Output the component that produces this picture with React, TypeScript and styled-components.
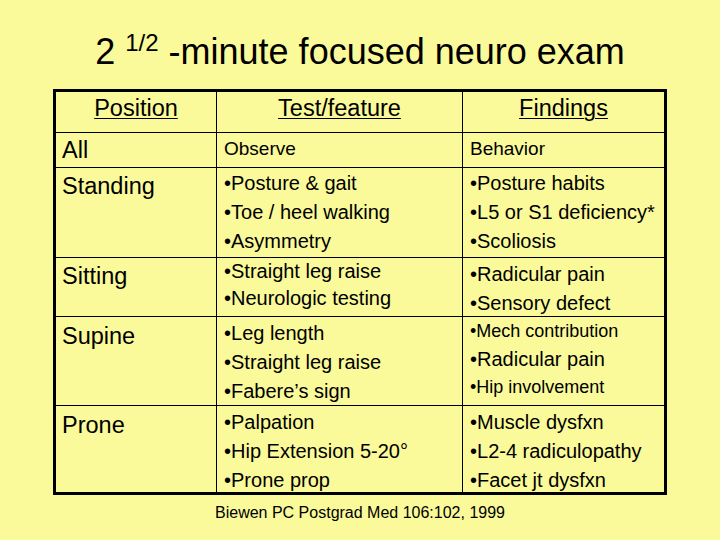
import React from "react";
import styled, { createGlobalStyle } from "styled-components";

interface Line {
  text: string;
  size?: number;
}

interface Block {
  top: number;
  lh?: number;
  size?: number;
  lines: Line[];
}

interface Row {
  position: string;
  posTop: number;
  height: number;
  test: Block;
  findings: Block;
}

const rows: Row[] = [
  {
    position: "All",
    posTop: 3,
    height: 35,
    test: { top: 1, size: 19, lines: [{ text: "Observe" }] },
    findings: { top: 1, size: 19, lines: [{ text: "Behavior" }] },
  },
  {
    position: "Standing",
    posTop: 4,
    height: 90,
    test: {
      top: 1,
      lines: [
        { text: "•Posture & gait" },
        { text: "•Toe / heel walking" },
        { text: "•Asymmetry" },
      ],
    },
    findings: {
      top: 1,
      lines: [
        { text: "•Posture habits" },
        { text: "•L5 or S1 deficiency*" },
        { text: "•Scoliosis" },
      ],
    },
  },
  {
    position: "Sitting",
    posTop: 4,
    height: 59,
    test: {
      top: 0,
      lh: 27,
      lines: [{ text: "•Straight leg raise" }, { text: "•Neurologic testing" }],
    },
    findings: {
      top: 2,
      lines: [{ text: "•Radicular pain" }, { text: "•Sensory defect" }],
    },
  },
  {
    position: "Supine",
    posTop: 5,
    height: 89,
    test: {
      top: 2,
      lines: [
        { text: "•Leg length" },
        { text: "•Straight leg raise" },
        { text: "•Fabere’s sign" },
      ],
    },
    findings: {
      top: 0,
      lh: 28,
      lines: [
        { text: "•Mech contribution", size: 18 },
        { text: "•Radicular pain" },
        { text: "•Hip involvement", size: 18 },
      ],
    },
  },
  {
    position: "Prone",
    posTop: 5,
    height: 86,
    test: {
      top: 2,
      lines: [
        { text: "•Palpation" },
        { text: "•Hip Extension 5-20°" },
        { text: "•Prone prop" },
      ],
    },
    findings: {
      top: 2,
      lines: [
        { text: "•Muscle dysfxn" },
        { text: "•L2-4 radiculopathy" },
        { text: "•Facet jt dysfxn" },
      ],
    },
  },
];

export default function App() {
  const template = [41, ...rows.map((r) => r.height)]
    .map((h) => `${h}px`)
    .join(" ");

  return (
    <>
      <GlobalStyle />
      <Slide>
        <Title>
          2 <Sup>1/2</Sup> -minute focused neuro exam
        </Title>
        <Table style={{ gridTemplateRows: template }}>
          <HeadCell $top={2}>
            <HeadText>Position</HeadText>
          </HeadCell>
          <HeadCell $top={2}>
            <HeadText>Test/feature</HeadText>
          </HeadCell>
          <HeadCell $top={2} $lastCol>
            <HeadText>Findings</HeadText>
          </HeadCell>

          {rows.map((row, i) => {
            const last = i === rows.length - 1;
            return (
              <React.Fragment key={row.position}>
                <PosCell $top={row.posTop} $lastRow={last}>
                  {row.position}
                </PosCell>
                <ItemCell $top={row.test.top} $lastRow={last}>
                  {row.test.lines.map((l) => (
                    <Item
                      key={l.text}
                      $size={l.size ?? row.test.size ?? 20}
                      $lh={row.test.lh ?? 29}
                    >
                      {l.text}
                    </Item>
                  ))}
                </ItemCell>
                <ItemCell $top={row.findings.top} $lastRow={last} $lastCol>
                  {row.findings.lines.map((l) => (
                    <Item
                      key={l.text}
                      $size={l.size ?? row.findings.size ?? 20}
                      $lh={row.findings.lh ?? 29}
                    >
                      {l.text}
                    </Item>
                  ))}
                </ItemCell>
              </React.Fragment>
            );
          })}
        </Table>
        <Source>Biewen PC Postgrad Med 106:102, 1999</Source>
      </Slide>
    </>
  );
}

const GlobalStyle = createGlobalStyle`
  html, body {
    margin: 0;
    padding: 0;
    background: #fafa9a;
  }
  body {
    font-family: "Liberation Sans", Arial, sans-serif;
    color: #000;
  }
`;

const Slide = styled.div`
  width: 720px;
  height: 540px;
  display: flex;
  flex-direction: column;
  align-items: center;
  background: #fafa9a;
  overflow: hidden;
`;

const Title = styled.h1`
  margin: 30px 0 0;
  font-size: 36px;
  line-height: 44px;
  height: 44px;
  font-weight: normal;
  white-space: nowrap;
`;

const Sup = styled.span`
  font-size: 24px;
  line-height: 0;
  position: relative;
  top: -13px;
`;

const Table = styled.div`
  margin-top: 15px;
  width: 614px;
  box-sizing: border-box;
  border: 3px solid #000;
  display: grid;
  grid-template-columns: 161px 246px 1fr;
`;

const Cell = styled.div<{ $top: number; $lastRow?: boolean; $lastCol?: boolean }>`
  box-sizing: border-box;
  padding-top: ${(p) => p.$top}px;
  border-right: ${(p) => (p.$lastCol ? "none" : "1px solid #000")};
  border-bottom: ${(p) => (p.$lastRow ? "none" : "1px solid #000")};
  overflow: hidden;
`;

const HeadCell = styled(Cell)`
  text-align: center;
  font-size: 23.5px;
  line-height: 29px;
`;

const HeadText = styled.span`
  text-decoration: underline;
  text-decoration-thickness: 1px;
  text-underline-offset: 2px;
`;

const PosCell = styled(Cell)`
  padding-left: 6px;
  font-size: 23.5px;
  line-height: 29px;
`;

const ItemCell = styled(Cell)`
  padding-left: 7px;
`;

const Item = styled.div<{ $size: number; $lh: number }>`
  font-size: ${(p) => p.$size}px;
  line-height: ${(p) => p.$lh}px;
  white-space: nowrap;
`;

const Source = styled.div`
  margin-top: 8px;
  font-size: 16px;
  line-height: 20px;
  white-space: nowrap;
`;
